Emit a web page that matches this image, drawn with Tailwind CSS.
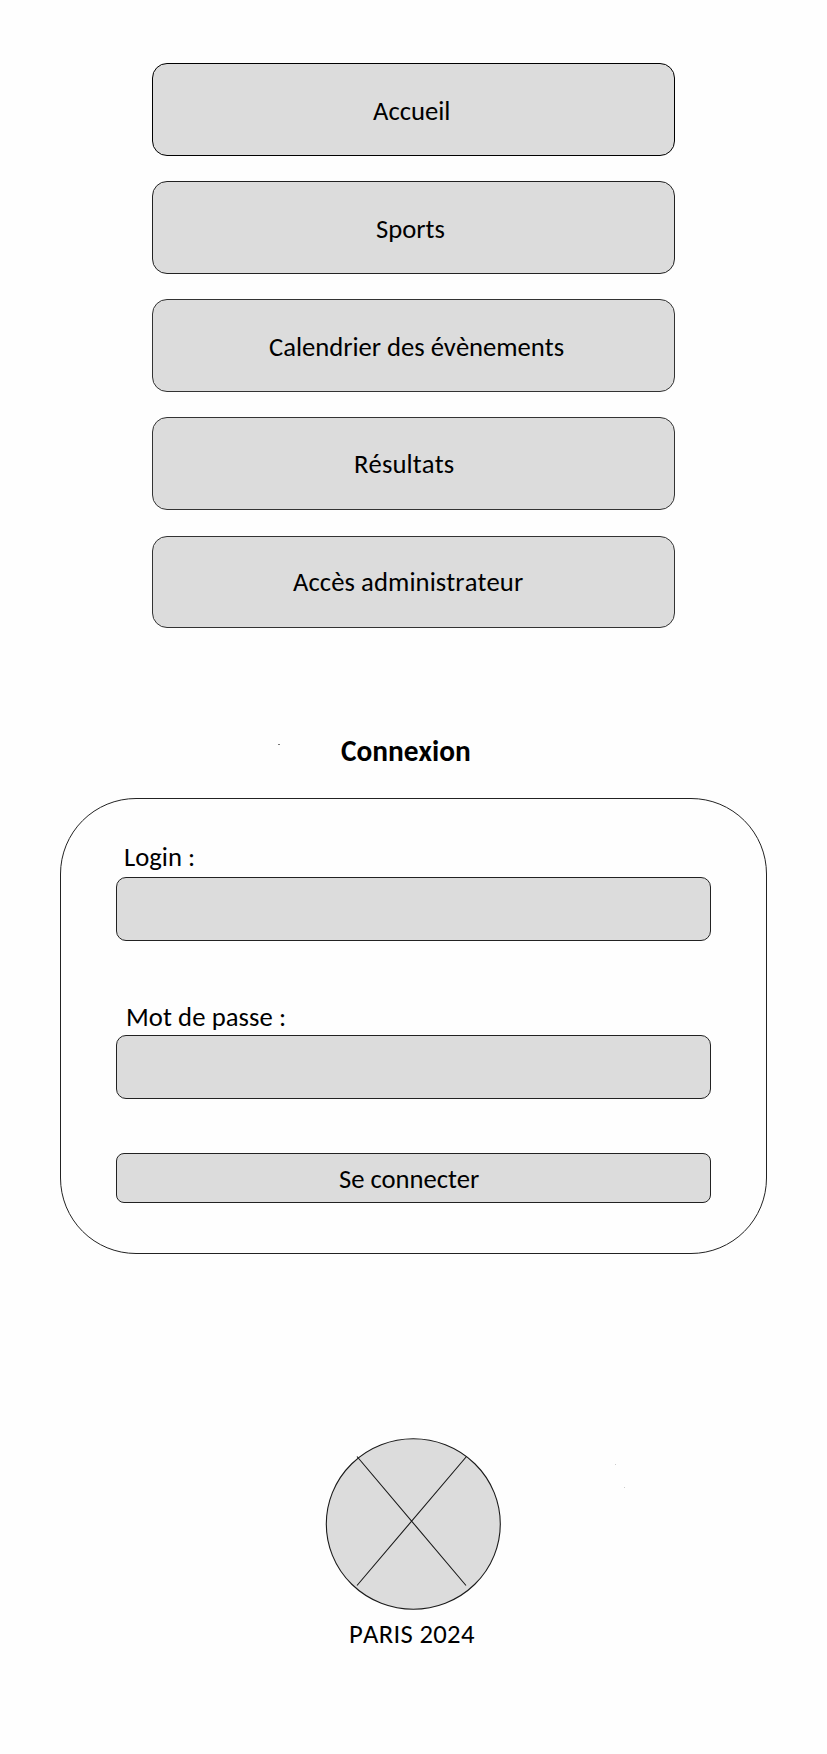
<!DOCTYPE html>
<html lang="fr">
<head>
<meta charset="utf-8">
<title>Paris 2024 – Connexion</title>
<script src="https://cdn.jsdelivr.net/npm/@tailwindcss/browser@4"></script>
</head>
<body class="relative h-[1754px] w-[827px] overflow-x-hidden bg-[#fefefe] font-[Carlito,Lato,sans-serif] text-[26.67px] leading-8 text-black [font-kerning:none]">
  <nav class="ml-[152px] flex w-[523px] flex-col pt-[63px]">
    <a class="h-[93px] rounded-[15px] border border-black bg-[#dcdcdc] pt-[31px] pl-[220px] whitespace-nowrap">Accueil</a>
    <a class="mt-[25px] h-[93px] rounded-[15px] border border-[#222] bg-[#dcdcdc] pt-[31px] pl-[223px] whitespace-nowrap">Sports</a>
    <a class="mt-[25px] h-[93px] rounded-[15px] border border-[#333] bg-[#dcdcdc] pt-[31px] pl-[116px] tracking-[-0.03px] whitespace-nowrap">Calendrier des évènements</a>
    <a class="mt-[25px] h-[93px] rounded-[15px] border border-[#333] bg-[#dcdcdc] pt-[30px] pl-[201px] tracking-[0.1px] whitespace-nowrap">Résultats</a>
    <a class="mt-[26px] h-[92px] rounded-[15px] border border-[#333] bg-[#dcdcdc] pt-[29px] pl-[140px] tracking-[0.07px] whitespace-nowrap">Accès administrateur</a>
  </nav>
  <h1 class="mt-[105px] ml-[341px] text-[29.33px] leading-9 font-bold">Connexion</h1>
  <form class="mt-[29px] ml-[60px] flex h-[456px] w-[707px] flex-col rounded-[76px] border border-[#222] pr-[55px] pl-[55px]">
    <label class="mt-[42px] pl-[8px]">Login :</label>
    <div class="mt-[4px] h-[64px] shrink-0 rounded-[10px] border border-[#222] bg-[#dcdcdc]"></div>
    <label class="mt-[60px] pl-[10px] tracking-[0.08px]">Mot de passe :</label>
    <div class="mt-[2px] h-[64px] shrink-0 rounded-[10px] border border-[#222] bg-[#dcdcdc]"></div>
    <button type="button" class="mt-[54px] h-[50px] shrink-0 rounded-[8px] border border-[#222] bg-[#dcdcdc] pt-[2px] pl-[222px] text-left leading-8 tracking-[-0.05px]">Se connecter</button>
  </form>
  <footer class="mt-[182px] ml-[324px] w-[180px]">
    <svg class="block" width="180" height="178" viewBox="324 1436 180 178" fill="none" stroke="#1a1a1a" stroke-width="1.1">
      <ellipse cx="413.3" cy="1524" rx="87" ry="85.2" fill="#dcdcdc"/>
      <path d="M357 1456.500L466 1585.500M466.500 1456.500L357 1585.500"/>
    </svg>
    <p class="mt-[4px] pl-[25px] tracking-[0.3px] whitespace-nowrap">PARIS 2024</p>
  </footer>
  <svg class="pointer-events-none absolute top-0 left-0" width="827" height="1754" fill="#777">
    <rect x="278" y="744" width="2" height="1"/>
    <rect x="615" y="1464" width="1" height="1" fill="#ccc"/>
    <rect x="624" y="1487" width="1" height="1" fill="#ccc"/>
  </svg>
</body>
</html>
